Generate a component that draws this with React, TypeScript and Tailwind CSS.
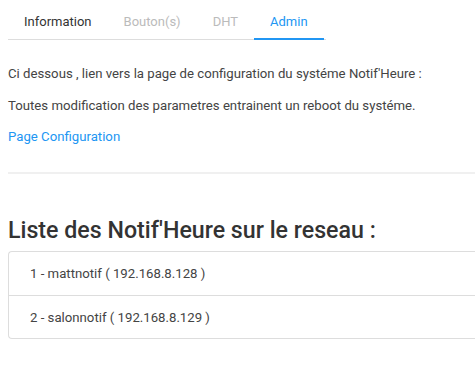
import React from 'react';

const tabs = [
  { label: 'Information', cls: 'text-[#333]' },
  { label: 'Bouton(s)', cls: 'text-[#bbb]' },
  { label: 'DHT', cls: 'text-[#bbb]' },
  { label: 'Admin', cls: 'text-[#2196f3]', active: true },
];

const notifs = [
  '1 - mattnotif ( 192.168.8.128 )',
  '2 - salonnotif ( 192.168.8.129 )',
];

const App = () => {
  return (
    <div className="min-h-[372px] bg-white pl-2 pt-[7px] font-['Roboto',sans-serif] text-[13.2px] text-[#444]">
      {/* Tabs */}
      <div className="flex w-[318px] border-b border-[#ddd] text-[13px]">
        {tabs.map((t) => (
          <div
            key={t.label}
            className={`-mb-px px-4 pb-[8px] pt-[7px] leading-[16px] ${t.cls} ${t.active ? 'border-b-2 border-[#2196f3]' : 'border-b-2 border-transparent'}`}
          >
            {t.label}
          </div>
        ))}
      </div>

      {/* Admin content */}
      <p className="mt-[26px] leading-[16px]">
        Ci dessous , lien vers la page de configuration du systéme Notif'Heure :
      </p>
      <p className="mt-[16px] leading-[16px]">
        Toutes modification des parametres entrainent un reboot du systéme.
      </p>
      <a className="mt-[15px] block leading-[16px] text-[#2196f3]">Page Configuration</a>

      <div className="mt-[27px] h-[2px] bg-[#f0f0f0]" />

      <h2 className="mt-[42px] text-[23.2px] font-medium leading-[28px] text-[#333]">
        Liste des Notif'Heure sur le reseau :
      </h2>

      <div className="mt-[7px] rounded-l-[4px] border border-r-0 border-[#ddd]">
        {notifs.map((n, i) => (
          <div
            key={n}
            className={`h-[43px] pl-[21px] leading-[43px] text-[#444] ${i > 0 ? 'border-t border-[#ddd]' : ''}`}
          >
            {n}
          </div>
        ))}
      </div>
    </div>
  );
};

export default App;
